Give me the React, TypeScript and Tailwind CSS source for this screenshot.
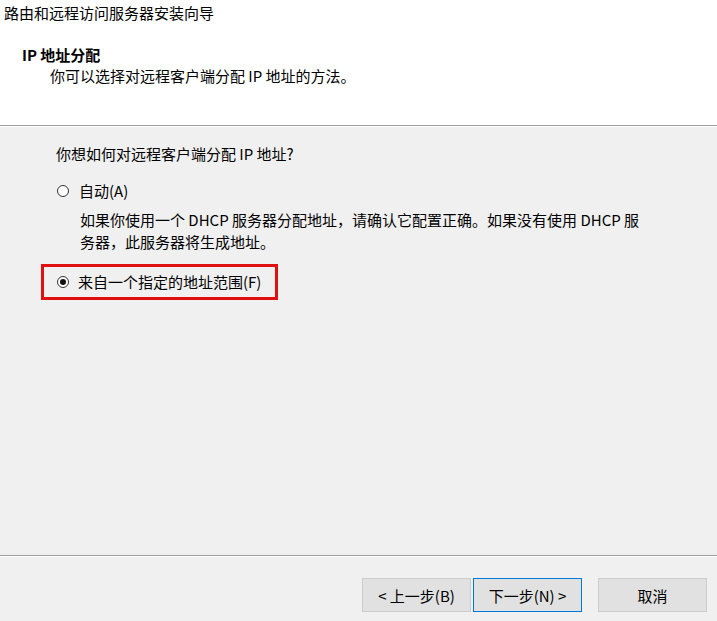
import React from 'react';

const font = { fontFamily: '"Noto Sans CJK SC", "Noto Sans", sans-serif' };

function Radio({ checked }: { checked?: boolean }) {
     return (
          <span className="w-[12px] h-[12px] rounded-full border border-[#333333] bg-white flex items-center justify-center shrink-0">
               {checked && <span className="w-[6px] h-[6px] rounded-full bg-[#111111]" />}
          </span>
     );
}

function Button({ children, primary }: { children: React.ReactNode; primary?: boolean }) {
     return (
          <button
               className={
                    primary
                         ? 'w-[109px] h-[34px] bg-[#e1e1e1] border border-[#0078d7] text-[15px] text-black leading-none'
                         : 'w-[109px] h-[34px] bg-[#e1e1e1] border border-[#cccccc] text-[15px] text-black leading-none'
               }
          >
               {children}
          </button>
     );
}

export default function App() {
     return (
          <div className="w-[717px] h-[621px] bg-[#f0f0f0] flex flex-col text-black overflow-hidden" style={font}>
               {/* Header */}
               <div className="h-[126px] bg-white border-b border-[#a0a0a0] flex flex-col shrink-0">
                    <div className="pt-[3px] pl-[4px] text-[15px] leading-[20px]">路由和远程访问服务器安装向导</div>
                    <div className="pt-[22px] pl-[22px] text-[15px] leading-[20px] font-bold">IP 地址分配</div>
                    <div className="pl-[50px] pt-[1px] text-[15px] leading-[20px]">你可以选择对远程客户端分配 IP 地址的方法。</div>
               </div>

               {/* Content */}
               <div className="flex-1 border-t border-white border-b border-b-[#a0a0a0] flex flex-col pl-[56px] pt-[16px]">
                    <div className="text-[15px] leading-[22px]">你想如何对远程客户端分配 IP 地址?</div>

                    <div className="mt-[15px] flex items-center h-[22px] pl-[1px]">
                         <Radio />
                         <span className="ml-[10px] text-[15px] leading-[22px]">自动(A)</span>
                    </div>
                    <div className="mt-[7px] pl-[24px] text-[15px] leading-[22px]">
                         如果你使用一个 DHCP 服务器分配地址，请确认它配置正确。如果没有使用 DHCP 服
                         <br />
                         务器，此服务器将生成地址。
                    </div>

                    <div className="mt-[11px] -ml-[15px] w-[237px] h-[36px] border-[3px] border-[#e01010] flex items-center pl-[13px]">
                         <Radio checked />
                         <span className="ml-[9px] text-[15px] leading-[22px]">来自一个指定的地址范围(F)</span>
                    </div>
               </div>

               {/* Footer */}
               <div className="h-[65px] border-t border-white flex justify-end items-start pt-[21px] pr-[10px] shrink-0">
                    <Button>&lt; 上一步(B)</Button>
                    <div className="w-[2px]" />
                    <Button primary>下一步(N) &gt;</Button>
                    <div className="w-[16px]" />
                    <Button>取消</Button>
               </div>
          </div>
     );
}
